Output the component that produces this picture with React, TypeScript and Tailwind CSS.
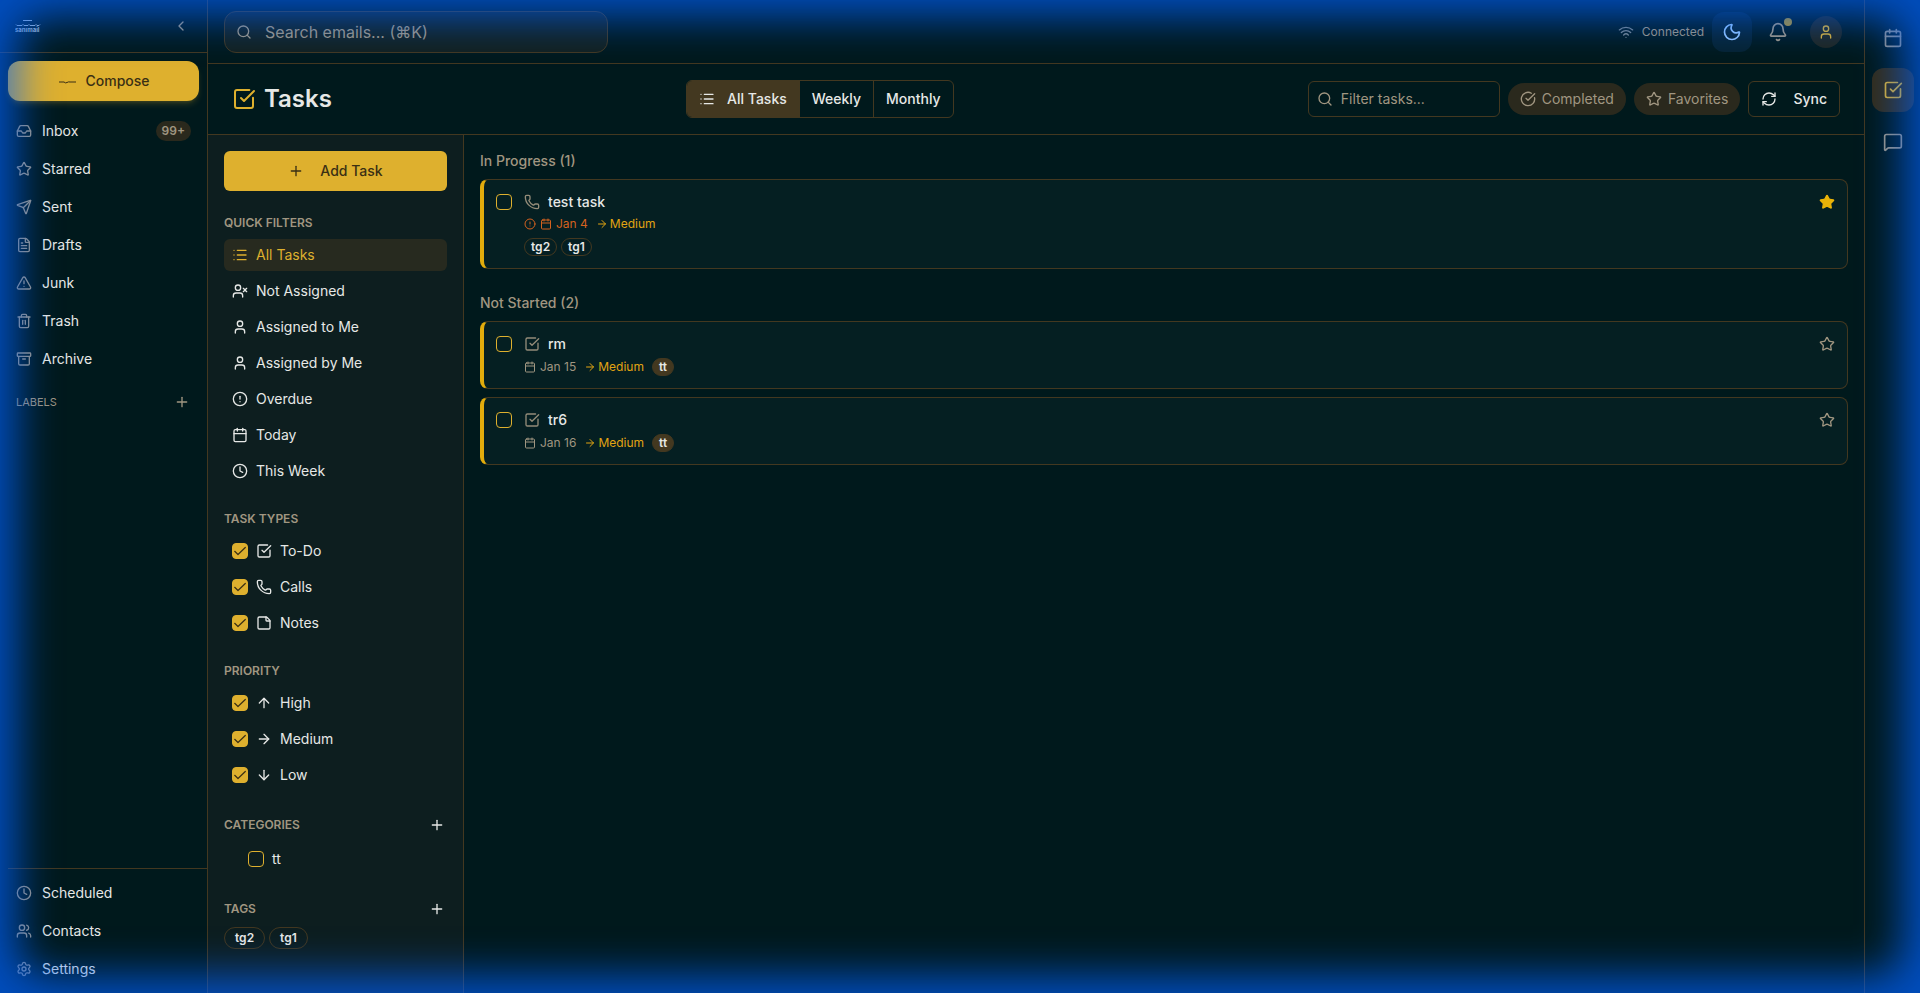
import type { ReactNode } from 'react';
import {
  AlertCircle,
  Archive,
  ArrowDown,
  ArrowRight,
  ArrowUp,
  Bell,
  Calendar,
  ChevronLeft,
  CircleCheckBig,
  Clock,
  FileText,
  Inbox,
  List,
  MessageSquare,
  Moon,
  Phone,
  Plus,
  RefreshCw,
  Search,
  Send,
  Settings,
  SquareCheckBig,
  Star,
  StickyNote,
  Trash2,
  TriangleAlert,
  User,
  Users,
  UserX,
  Wifi,
  type LucideIcon,
} from 'lucide-react';

interface NavItem {
  label: string;
  icon: LucideIcon;
  count?: string;
}

interface Task {
  title: string;
  icon: LucideIcon;
  due: string;
  overdue?: boolean;
  starred?: boolean;
  category?: string;
  tags?: string[];
}

const mailFolders: NavItem[] = [
  { label: 'Inbox', icon: Inbox, count: '99+' },
  { label: 'Starred', icon: Star },
  { label: 'Sent', icon: Send },
  { label: 'Drafts', icon: FileText },
  { label: 'Junk', icon: TriangleAlert },
  { label: 'Trash', icon: Trash2 },
  { label: 'Archive', icon: Archive },
];

const footerItems: NavItem[] = [
  { label: 'Scheduled', icon: Clock },
  { label: 'Contacts', icon: Users },
  { label: 'Settings', icon: Settings },
];

const quickFilters: NavItem[] = [
  { label: 'All Tasks', icon: List },
  { label: 'Not Assigned', icon: UserX },
  { label: 'Assigned to Me', icon: User },
  { label: 'Assigned by Me', icon: User },
  { label: 'Overdue', icon: AlertCircle },
  { label: 'Today', icon: Calendar },
  { label: 'This Week', icon: Clock },
];

const taskTypes: NavItem[] = [
  { label: 'To-Do', icon: SquareCheckBig },
  { label: 'Calls', icon: Phone },
  { label: 'Notes', icon: StickyNote },
];

const priorities: NavItem[] = [
  { label: 'High', icon: ArrowUp },
  { label: 'Medium', icon: ArrowRight },
  { label: 'Low', icon: ArrowDown },
];

const tags = ['tg2', 'tg1'];

const taskGroups: { title: string; tasks: Task[] }[] = [
  {
    title: 'In Progress (1)',
    tasks: [{ title: 'test task', icon: Phone, due: 'Jan 4', overdue: true, starred: true, tags: ['tg2', 'tg1'] }],
  },
  {
    title: 'Not Started (2)',
    tasks: [
      { title: 'rm', icon: SquareCheckBig, due: 'Jan 15', category: 'tt' },
      { title: 'tr6', icon: SquareCheckBig, due: 'Jan 16', category: 'tt' },
    ],
  },
];

function Logo() {
  return (
    <svg viewBox="0 0 26 14" className="w-[26px] h-[14px] text-[#b9c4c6]" fill="none" stroke="currentColor">
      <path d="M8 1.500h9" />
      <path d="M1 5.500 2 6.500h5l1-1 1 1h4l1-1 1 1h5l1-1 1 1h2l1-1" />
      <text x="0" y="13" fontSize="6" fontWeight="700" fill="currentColor" stroke="none">
        sanımail
      </text>
    </svg>
  );
}

function ComposeMark() {
  return (
    <svg viewBox="0 0 20 20" className="w-5 h-5" fill="none" stroke="currentColor" strokeWidth="1">
      <path d="M2 11h5q1.500 1.500 3 .5t3-.5h6" />
    </svg>
  );
}

function Checkbox({ label, checked }: { label: string; checked?: boolean }) {
  return (
    <span className="relative block w-4 h-4 shrink-0">
      <input
        type="checkbox"
        aria-label={label}
        defaultChecked={checked}
        className="peer block appearance-none w-4 h-4 rounded border border-[#deb02e] checked:bg-[#deb02e]"
      />
      <svg
        viewBox="0 0 16 16"
        className="absolute inset-0 w-4 h-4 pointer-events-none hidden peer-checked:block text-[#3a2f14]"
        fill="none"
        stroke="currentColor"
        strokeWidth="1.2"
        strokeLinecap="round"
        strokeLinejoin="round"
      >
        <path d="M13.300 4.500 6 11.500 2.700 8.300" />
      </svg>
    </span>
  );
}

function SidebarLink({ item }: { item: NavItem }) {
  const Icon = item.icon;
  return (
    <a href="#" className="flex items-center gap-2.5 h-9 px-2 rounded-lg text-sm">
      <Icon className="w-4 h-4 text-[#a09681]" />
      <span className="flex-1">{item.label}</span>
      {item.count && (
        <span className="px-1.5 h-5 leading-5 rounded-full bg-[#2a291d] text-[#a09681] text-xs font-semibold">
          {item.count}
        </span>
      )}
    </a>
  );
}

function Sidebar() {
  return (
    <aside className="flex flex-col w-52 shrink-0 border-r border-[#433820]">
      <div className="flex items-center justify-between h-[53px] pl-[15px] pr-4 border-b border-[#433820]">
        <Logo />
        <button aria-label="Collapse sidebar" className="p-0.5 text-[#a09681]">
          <ChevronLeft className="w-4 h-4" />
        </button>
      </div>
      <div className="p-2 pb-3">
        <button className="flex items-center justify-center gap-2 w-full h-10 rounded-xl bg-[#deb02e] text-[#3a2f14] text-sm font-medium shadow-md shadow-[#deb02e]/20">
          <ComposeMark />
          Compose
        </button>
      </div>
      <nav className="flex flex-col gap-0.5 px-2">
        {mailFolders.map((item) => (
          <SidebarLink key={item.label} item={item} />
        ))}
      </nav>
      <div className="flex items-center justify-between h-[18px] mt-4 pl-4 pr-[17px] text-[#a09681]">
        <span className="text-[11px]">LABELS</span>
        <button aria-label="Add label">
          <Plus className="w-4 h-4" />
        </button>
      </div>
      <nav className="flex flex-col gap-0.5 mt-auto ml-2 pr-2 py-1.5 border-t border-[#433820]">
        {footerItems.map((item) => (
          <SidebarLink key={item.label} item={item} />
        ))}
      </nav>
    </aside>
  );
}

function TopBar() {
  return (
    <header className="flex items-center justify-between h-16 px-4 border-b border-[#433820]">
      <label className="flex items-center gap-[13px] w-96 h-[42px] px-[11px] rounded-xl border border-[#433820] bg-[#12211f] text-[#a09681]">
        <Search className="w-4 h-4" />
        <input
          type="text"
          aria-label="Search emails"
          placeholder="Search emails... (⌘K)"
          className="flex-1 min-w-0 bg-transparent outline-none text-base placeholder:text-[#a09681]"
        />
      </label>
      <div className="flex items-center gap-2">
        <div className="flex items-center gap-2 text-xs text-[#a09681]">
          <Wifi className="w-4 h-4 text-[#7b8587]" />
          Connected
        </div>
        <button
          aria-label="Toggle theme"
          className="flex items-center justify-center w-10 h-10 rounded-xl bg-[#3b82f6]/10 text-[#93c5fd]"
        >
          <Moon className="w-5 h-5" />
        </button>
        <button aria-label="Notifications" className="relative flex items-center justify-center w-9 h-9 text-[#a09681]">
          <Bell className="w-5 h-5" />
          <span className="absolute top-1 right-1 w-2 h-2 rounded-full bg-[#deb02e]/80" />
        </button>
        <button aria-label="Account" className="flex items-center justify-center w-11 h-10">
          <span className="flex items-center justify-center w-8 h-8 rounded-full bg-[#1f2620] text-[#deb02e]">
            <User className="w-4 h-4" />
          </span>
        </button>
      </div>
    </header>
  );
}

function TaskToolbar() {
  return (
    <div className="flex items-center justify-between h-[71px] px-6 border-b border-[#433820]">
      <h1 className="flex items-center gap-2 text-2xl font-semibold">
        <SquareCheckBig className="w-6 h-6 text-[#deb02e]" />
        Tasks
      </h1>
      <div className="flex rounded-md border border-[#433820] overflow-hidden text-sm font-medium">
        <button className="flex items-center gap-3 h-9 px-3 bg-[#433820]">
          <List className="w-4 h-4" />
          All Tasks
        </button>
        <button className="h-9 px-3 border-l border-[#433820]">Weekly</button>
        <button className="h-9 px-3 border-l border-[#433820]">Monthly</button>
      </div>
      <div className="flex items-center gap-2 text-sm">
        <label className="flex items-center gap-2 w-48 h-9 px-2 rounded-md border border-[#433820] text-[#a09681]">
          <Search className="w-4 h-4" />
          <input
            type="text"
            aria-label="Filter tasks"
            placeholder="Filter tasks..."
            className="flex-1 min-w-0 bg-transparent outline-none placeholder:text-[#a09681]"
          />
        </label>
        <button className="flex items-center gap-1.5 h-8 px-3 rounded-full bg-[#2a291d] text-[#a09681]">
          <CircleCheckBig className="w-4 h-4" />
          Completed
        </button>
        <button className="flex items-center gap-1.5 h-8 px-3 rounded-full bg-[#2a291d] text-[#a09681]">
          <Star className="w-4 h-4" />
          Favorites
        </button>
        <button className="flex items-center gap-4 h-9 px-3 rounded-md border border-[#433820] font-medium">
          <RefreshCw className="w-4 h-4" />
          Sync
        </button>
      </div>
    </div>
  );
}

function FilterSection({ title, onAdd, children }: { title: string; onAdd?: boolean; children: ReactNode }) {
  return (
    <section className="flex flex-col gap-2">
      <div className={onAdd ? 'flex items-center justify-between h-5 pr-0.5' : 'flex items-center h-4'}>
        <h3 className="text-xs font-semibold uppercase text-[#a09681]">{title}</h3>
        {onAdd && (
          <button aria-label={`Add ${title}`}>
            <Plus className="w-4 h-4" />
          </button>
        )}
      </div>
      {children}
    </section>
  );
}

function CheckList({ items }: { items: NavItem[] }) {
  return (
    <div className="flex flex-col gap-1">
      {items.map(({ label, icon: Icon }) => (
        <label key={label} className="flex items-center gap-2 h-8 px-2 text-sm">
          <Checkbox label={label} checked />
          <Icon className="w-4 h-4" />
          {label}
        </label>
      ))}
    </div>
  );
}

function FilterPanel() {
  return (
    <aside className="flex flex-col gap-6 w-64 shrink-0 p-4 border-r border-[#433820] bg-[#0d1e1f]">
      <button className="flex items-center justify-center gap-4 h-10 rounded-md bg-[#deb02e] text-[#3a2f14] text-sm font-medium">
        <Plus className="w-4 h-4" />
        Add Task
      </button>

      <FilterSection title="Quick Filters">
        <div className="flex flex-col gap-1">
          {quickFilters.map(({ label, icon: Icon }, idx) => (
            <button
              key={label}
              className={`flex items-center gap-2 h-8 px-2 rounded-md text-sm ${idx === 0 ? 'bg-[#272a1f] text-[#deb02e]' : ''}`}
            >
              <Icon className="w-4 h-4" />
              {label}
            </button>
          ))}
        </div>
      </FilterSection>

      <FilterSection title="Task Types">
        <CheckList items={taskTypes} />
      </FilterSection>

      <FilterSection title="Priority">
        <CheckList items={priorities} />
      </FilterSection>

      <FilterSection title="Categories" onAdd>
        <label className="flex items-center gap-2 h-8 pl-6 text-sm">
          <Checkbox label="tt" />
          tt
        </label>
      </FilterSection>

      <FilterSection title="Tags" onAdd>
        <div className="flex gap-1">
          {tags.map((tag) => (
            <span
              key={tag}
              className="flex items-center h-[22px] px-2.5 rounded-full border border-[#433820] text-xs font-semibold"
            >
              {tag}
            </span>
          ))}
        </div>
      </FilterSection>
    </aside>
  );
}

function TaskCard({ task }: { task: Task }) {
  const Icon = task.icon;
  return (
    <article className="flex items-start gap-3 p-3 rounded-lg border border-l-4 border-[#433820] border-l-[#e2ac0c] bg-[#051f22]">
      <div className="pt-0.5">
        <Checkbox label={task.title} />
      </div>
      <div className="flex-1 min-w-0">
        <div className="flex items-center gap-2 h-5">
          <Icon className="w-4 h-4 text-[#948c79]" />
          <h4 className="text-sm font-medium">{task.title}</h4>
        </div>
        <div className="flex items-center gap-2 mt-1 text-xs">
          <span className={`flex items-center gap-1 ${task.overdue ? 'text-[#d4621f]' : 'text-[#a09681]'}`}>
            {task.overdue && <AlertCircle className="w-3 h-3" />}
            <Calendar className="w-3 h-3" />
            {task.due}
          </span>
          <span className="flex items-center gap-0.5 text-[#e2a412]">
            <ArrowRight className="w-3 h-3" />
            Medium
          </span>
          {task.category && (
            <span className="flex items-center h-[18px] px-1.5 rounded-full border border-[#433820] bg-[#433820] font-semibold">
              {task.category}
            </span>
          )}
        </div>
        {task.tags && (
          <div className="flex gap-1 mt-1.5">
            {task.tags.map((tag) => (
              <span
                key={tag}
                className="flex items-center h-[18px] px-1.5 rounded-full border border-[#433820] text-xs font-semibold"
              >
                {tag}
              </span>
            ))}
          </div>
        )}
      </div>
      <button aria-label={`Favorite ${task.title}`} className="pt-0.5">
        <Star className={task.starred ? 'w-4 h-4 fill-[#eab308] text-[#eab308]' : 'w-4 h-4 text-[#a09681]'} />
      </button>
    </article>
  );
}

function AppRail() {
  return (
    <nav className="flex flex-col items-center gap-2 w-14 shrink-0 pt-4 border-l border-[#433820] text-[#a09681]">
      <button aria-label="Calendar" className="flex items-center justify-center w-[42px] h-11 rounded-xl">
        <Calendar className="w-5 h-5" />
      </button>
      <button
        aria-label="Tasks"
        className="flex items-center justify-center w-[42px] h-11 rounded-xl bg-[#332c18] text-[#deb02e]"
      >
        <SquareCheckBig className="w-5 h-5" />
      </button>
      <button aria-label="Chat" className="flex items-center justify-center w-[42px] h-11 rounded-xl">
        <MessageSquare className="w-5 h-5" />
      </button>
    </nav>
  );
}

export default function App() {
  return (
    <div className="flex min-h-screen bg-[#00191c] text-[#e6e8e6] font-[Inter,'Noto_Sans',sans-serif]">
      <Sidebar />
      <div className="flex flex-col flex-1 min-w-0">
        <TopBar />
        <TaskToolbar />
        <div className="flex flex-1">
          <FilterPanel />
          <main className="flex flex-col gap-6 flex-1 min-w-0 p-4">
            {taskGroups.map((group) => (
              <section key={group.title} className="flex flex-col gap-2">
                <h2 className="text-sm font-medium text-[#a09681]">{group.title}</h2>
                {group.tasks.map((task) => (
                  <TaskCard key={task.title} task={task} />
                ))}
              </section>
            ))}
          </main>
        </div>
      </div>
      <AppRail />

      {/* Blue glow around the window edge, rounded towards the corners */}
      <div className="fixed -inset-8 rounded-[80px] pointer-events-none shadow-[inset_0_0_40px_50px_rgba(0,98,255,0.7)]" />
    </div>
  );
}
